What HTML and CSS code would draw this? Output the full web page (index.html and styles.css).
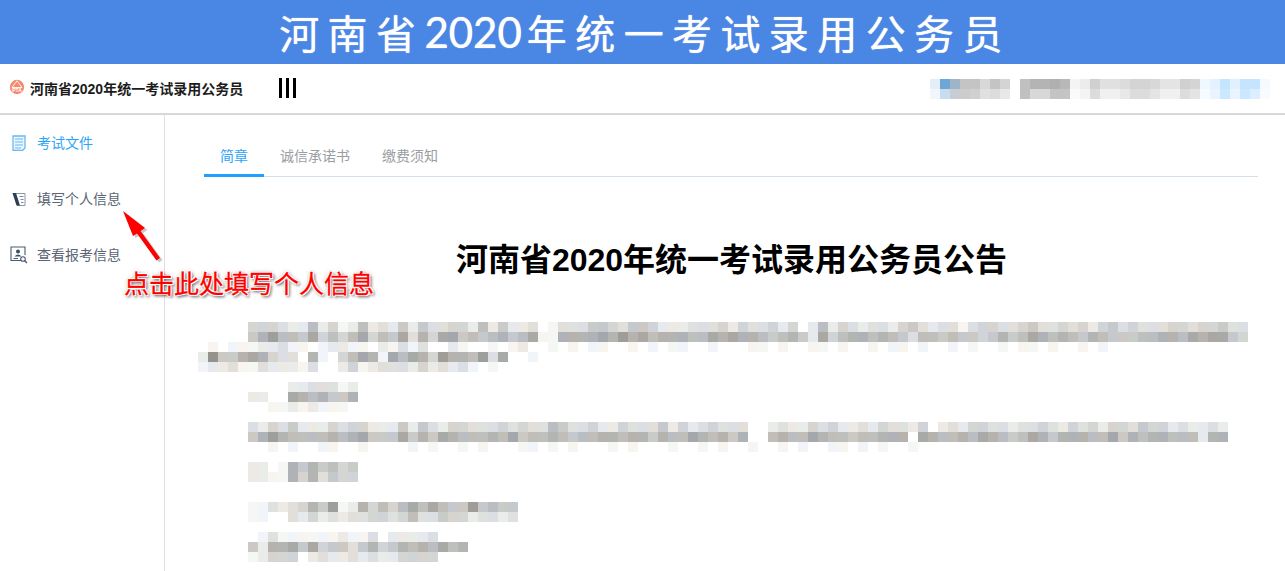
FILE: index.html
```html
<!DOCTYPE html>
<html lang="zh-CN">
<head>
    <meta charset="UTF-8">
    <meta name="viewport" content="width=device-width, initial-scale=1.0">
    <title>河南省2020年统一考试录用公务员</title>
    <link rel="stylesheet" href="styles.css">
</head>
<body>
    <div class="banner">河南省<span class="banner-num">2020</span>年统一考试录用公务员</div>

    <div class="topbar">
        <svg class="logo" viewBox="0 0 16 16" width="16" height="16">
            <circle cx="8" cy="8" r="7.2" fill="#f58a70"/>
            <path d="M8 1.8 L13 8.5 H3 Z" fill="none" stroke="#fff" stroke-width="0.9"/>
            <text class="logo-text" x="8" y="12.6" text-anchor="middle">PTA</text>
        </svg>
        <span class="site-name">河南省2020年统一考试录用公务员</span>
        <div class="menu-toggle"><i></i><i></i><i></i></div>
        <div class="user-blur" id="userBlur"></div>
    </div>

    <div class="layout">
        <aside class="sidebar">
            <a class="side-item active">
                <svg viewBox="0 0 14 16" width="14" height="16">
                    <path d="M1 1 H13 V13 L10.5 15.5 H1 Z" fill="#eaf5ff" stroke="#6bb8f0" stroke-width="1.3"/>
                    <path d="M3 4 H11 M3 7 H11 M3 10 H11 M3 13 H9" stroke="#6bb8f0" stroke-width="1.2"/>
                </svg>
                考试文件
            </a>
            <a class="side-item">
                <svg viewBox="0 0 14 16" width="14" height="16">
                    <path d="M1 2.5 H13 V14.5 H5" fill="none" stroke="#8c95a3" stroke-width="1"/>
                    <path d="M0.5 2 H4 L8 14.5 H4.5 Z" fill="#2c3e55"/>
                    <path d="M7.5 5.5 H11.5 M8.5 8.5 H11.5 M9 11.5 H11.5" stroke="#7f8a99" stroke-width="1"/>
                </svg>
                填写个人信息
            </a>
            <a class="side-item">
                <svg viewBox="0 0 18 18" width="18" height="18">
                    <path d="M11 14.5 H1 V1 H15 V9" fill="none" stroke="#4a5a70" stroke-width="1.1"/>
                    <circle cx="8" cy="5.5" r="2" fill="#3c4c62"/>
                    <path d="M4.5 10.5 Q8 6.5 11.5 10.5 Z" fill="#3c4c62"/>
                    <path d="M3.5 12.5 H8" stroke="#4a5a70" stroke-width="1"/>
                    <circle cx="13" cy="13" r="2.3" fill="#fff" stroke="#4a5a70" stroke-width="1.1"/>
                    <path d="M14.7 14.7 L17 17" stroke="#4a5a70" stroke-width="1.3"/>
                </svg>
                查看报考信息
            </a>
        </aside>

        <main class="content">
            <div class="tabs">
                <a class="tab active">简章</a>
                <a class="tab">诚信承诺书</a>
                <a class="tab">缴费须知</a>
            </div>
            <h1 class="notice-title">河南省2020年统一考试录用公务员公告</h1>
            <div class="blur-text" id="blurText"></div>
        </main>

        <!-- annotation drawn over the screen -->
        <svg class="note-arrow" viewBox="0 0 50 60" width="50" height="60">
            <path d="M1 0 L23 17 L18.5 20 L38 47 L34.5 49.5 L15 22.5 L11 25 Z" fill="#888" opacity="0.45" transform="translate(2.5 2)"/>
            <path d="M1 0 L23 17 L18.5 20 L38 47 L34.5 49.5 L15 22.5 L11 25 Z" fill="#f00"/>
        </svg>
        <div class="note-text">点击此处填写个人信息</div>
    </div>

    <script src="blur.js"></script>
</body>
</html>
```

FILE: styles.css
```css
* { box-sizing: border-box; margin: 0; padding: 0; }
html, body { height: 100%; }
body { display: flex; flex-direction: column; overflow: hidden; background: #fff; font-family: "Liberation Sans", "Noto Sans CJK SC", sans-serif; font-size: 14px; }

.banner { display: flex; justify-content: center; align-items: center; flex: none; height: 64px; padding-left: 5px; background: #4a86e4; color: #fff; font-size: 40px; letter-spacing: 8.4px; white-space: nowrap; text-shadow: 0 0 1px #fff; }
.banner-num { font-family: Lato, sans-serif; font-size: 42px; letter-spacing: 0; margin-right: 5px; }

.topbar { display: flex; align-items: center; flex: none; height: 51px; padding-left: 9px; border-bottom: 2px solid #d8d8d8; }
.logo { flex: none; margin-top: -3px; }
.logo-text { fill: #fff; font-size: 5px; font-weight: bold; }
.site-name { margin-left: 5px; margin-top: -2px; color: #1c1c1c; font-size: 14px; font-weight: bold; white-space: nowrap; }
.menu-toggle { display: flex; gap: 4px; margin-left: 36px; margin-top: -1px; }
.menu-toggle i { display: block; width: 3px; height: 20px; background: #000; }
.user-blur { margin-left: auto; margin-right: 15px; margin-top: 1px; }

.layout { display: flex; position: relative; flex: 1; min-height: 0; }
.sidebar { flex: none; width: 165px; border-right: 1px solid #e0e0e0; }
.side-item { display: flex; align-items: center; height: 56px; padding-left: 10px; padding-bottom: 2px; color: #5a6473; }
.side-item svg { flex: none; width: 18px; margin-right: 9px; margin-top: 2px; }
.side-item.active { color: #2ba4f8; }

.content { flex: 1; min-width: 0; padding: 25px 27px 0 33px; }
.tabs { display: flex; height: 37px; margin-left: 6px; border-bottom: 1px solid #d3e0e9; }
.tab { height: 37px; padding: 5px 16px 0; color: #9a9ea3; }
.tab.active { color: #2ba4f8; border-bottom: 3px solid #1fa0ff; }

.notice-title { margin-top: 66px; height: 35px; color: #000; font-size: 32px; line-height: 35px; text-align: center; padding-left: 7px; }

.blur-text { margin-top: 44px; }
.blur-row { display: flex; height: 10px; }
.blur-row span { flex: none; width: 10px; height: 10px; }

.note-arrow { position: absolute; left: 122px; top: 96px; }
.note-text { position: absolute; left: 124px; top: 151px; color: #f00; font-size: 25px; line-height: 36px; white-space: nowrap; -webkit-text-stroke: 0.3px #f00; text-shadow: 1px 1px 0 #fff, -1px -1px 0 #fff, 1px -1px 0 #fff, -1px 1px 0 #fff, 2px 2px 3px #555, 0 0 4px #999; }
```

FILE: blur.js
```js
// pixelated text: every char is one 10px cell, 0 = white, f = darkest
const rows = [
    '000004443226241262325253344262522301333554355422233342433424026243233245323313443345334342453433344344533',
    '000005796658464684658374885656756811777787978677766878776567528467767653665655457568767657655566776878854',
    '0101112231101221102131300210010120010101100101011001000110100110100101101001010010110100101',
    '2a557874330710468718687497769380010',
    '122311322213002412333242323101',
    '',
    '0000000002233312',
    '0000022008767557',
    '000000011212111',
    '',
    '0000032435222434422252532443334343365334224333524234333002322434223243324023244332334324342443544232232',
    '0000057976666767855585758766676856676566776775766876757006766876656677708766768765687577766857677666277',
    '00000001010011001000010100101000110101000101000100101001001010011010100100',
    '',
    '0000022017575645',
    '0000022117473544',
    '',
    '',
    '00000113234759127464686865595655',
    '00000110032423233443463354423323',
    '',
    '000000131111112113022223',
    '000005277858455357457676867',
    '000001244402322323224444',
    ''
];
const tints = [[4, 0, -4], [-3, 1, 5], [0, 3, -1]];
const blurText = document.getElementById('blurText');

rows.forEach(row => {
    const line = document.createElement('div');
    line.className = 'blur-row';
    [...row].forEach((c, i) => {
        const n = parseInt(c, 16);
        const cell = document.createElement('span');
        if (n > 0) {
            const gray = 255 - n * 11;
            const t = tints[(i * 5 + n) % 3];
            cell.style.background = `rgb(${gray + t[0]}, ${gray + t[1]}, ${gray + t[2]})`;
        }
        line.appendChild(cell);
    });
    blurText.appendChild(line);
});

// blurred user info in the top bar
const userRows = [
    ['e4eef8', '6ea6d8', 'a0b4c8', 'c4c4c4', 'c4c4c4', 'd8d8d8', 'c4c4c4', 'd4d4d4', 'fff', 'c0c0c0', 'b4b4b4', 'b4b4b4', 'b0b0b0', 'b8b8b8', 'f4f4f4', 'ececec', 'd0d0d0', 'e0e0e0', 'e0e0e0', 'dcdcdc', 'd4d4d4', 'd4d4d4', 'd8d8d8', 'e4e4e4', 'e4e4e4', 'd0d0d0', 'd4d4d4', 'f0f8ff', 'e4f2ff', 'c4e4ff', 'e0f0ff', 'c4e4ff', 'c4e4ff', 'f4faff'],
    ['f0f6fc', 'c8dcf0', 'c8ccd4', 'cccccc', 'd0d0d0', 'e0e0e0', 'dcdcdc', 'e8e8e8', 'fff', 'c0c0c0', 'd8d8d8', 'd8d8d8', 'c4c4c4', 'c4c4c4', 'fafafa', 'f4f4f4', 'dcdcdc', 'f0f0f0', 'f0f0f0', 'e8e8e8', 'dcdcdc', 'dcdcdc', 'e4e4e4', 'f0f0f0', 'f0f0f0', 'dcdcdc', 'e4e4e4', 'f6fbff', 'e8f4ff', 'cce8ff', 'e8f4ff', 'cce8ff', 'dceeff', 'f8fcff']
];
const userBlur = document.getElementById('userBlur');

userRows.forEach(row => {
    const line = document.createElement('div');
    line.className = 'blur-row';
    row.forEach(color => {
        const cell = document.createElement('span');
        cell.style.background = '#' + color;
        line.appendChild(cell);
    });
    userBlur.appendChild(line);
});
```
